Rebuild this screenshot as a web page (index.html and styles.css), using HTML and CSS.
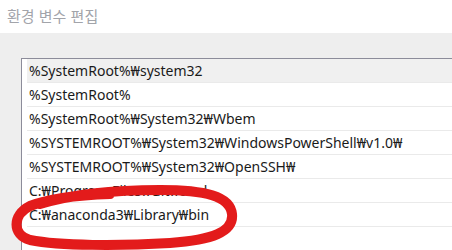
FILE: index.html
```html
<!DOCTYPE html>
<html lang="ko">
<head>
    <meta charset="UTF-8">
    <title>환경 변수 편집</title>
    <link rel="stylesheet" href="styles.css">
</head>
<body>

<header class="title-bar">환경 변수 편집</header>

<div class="dialog-body">
    <div class="path-list">
        <div class="path-row selected">%SystemRoot%₩system32</div>
        <div class="path-row">%SystemRoot%</div>
        <div class="path-row">%SystemRoot%₩System32₩Wbem</div>
        <div class="path-row">%SYSTEMROOT%₩System32₩WindowsPowerShell₩v1.0₩</div>
        <div class="path-row">%SYSTEMROOT%₩System32₩OpenSSH₩</div>
        <div class="path-row">C:₩Program Files₩Git₩cmd</div>
        <div class="path-row">C:₩anaconda3₩Library₩bin</div>
    </div>
</div>

<svg class="marker" width="452" height="250" viewBox="0 0 452 250">
    <path d="M 40 204 C 70 195, 110 190, 160 190 C 205 190, 230 196, 232 214 C 234 232, 212 240, 170 243 C 120 246, 60 246, 30 240 C 12 235, 12 215, 30 206 C 50 198, 80 195, 110 194"
          fill="none" stroke="#e31b1b" stroke-width="10" stroke-linecap="round" stroke-linejoin="round"/>
</svg>

</body>
</html>
```

FILE: styles.css
```css
body {
    margin: 0;
    padding: 0;
    width: 452px;
    height: 250px;
    overflow: hidden;
    background-color: #eeeeee;
    font-family: 'Noto Sans', 'Noto Sans CJK KR', sans-serif;
    position: relative;
}
.title-bar {
    background-color: #fff;
    height: 33px;
    box-sizing: border-box;
    padding: 5px 0 0 7px;
    font-family: 'Noto Sans CJK KR', sans-serif;
    font-size: 15px;
    color: #a2a4aa;
}
.dialog-body {
    padding: 25px 0 0 21px;
}
.path-list {
    background-color: #fff;
    border-top: 1px solid #8c8c9a;
    border-left: 1px solid #8c8c9a;
    height: 200px;
    padding-left: 5px;
}
.path-row {
    height: 24px;
    box-sizing: border-box;
    line-height: 23px;
    padding-left: 2px;
    border-bottom: 1px solid #eaeaea;
    font-size: 14px;
    color: #1a1a1a;
    white-space: nowrap;
}
.path-row.selected {
    background-color: #f0f0f0;
}
.marker {
    position: absolute;
    top: 0;
    left: 0;
}
```
